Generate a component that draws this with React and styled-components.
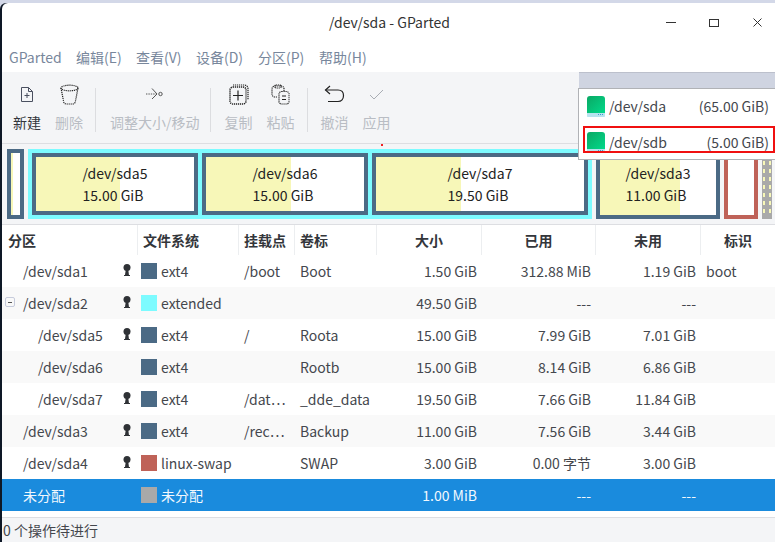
import styled, { createGlobalStyle } from "styled-components";

const GlobalStyle = createGlobalStyle`
  html, body {
    margin: 0;
    padding: 0;
    height: 100%;
    overflow: hidden;
    background: #d3d8e8;
    font-family: "Noto Sans CJK SC", "Noto Sans", sans-serif;
    font-size: 14px;
    color: #3a3d42;
  }
`;

const PARTITIONS = [
  { name: "/dev/sda1", indent: 21, lock: true, color: "#4b6a85", fs: "ext4", mount: "/boot", label: "Boot", size: "1.50 GiB", used: "312.88 MiB", free: "1.19 GiB", flag: "boot" },
  { name: "/dev/sda2", indent: 21, lock: true, color: "#7dfbff", fs: "extended", size: "49.50 GiB", used: "---", free: "---", expander: true },
  { name: "/dev/sda5", indent: 36, lock: true, color: "#4b6a85", fs: "ext4", mount: "/", label: "Roota", size: "15.00 GiB", used: "7.99 GiB", free: "7.01 GiB" },
  { name: "/dev/sda6", indent: 36, color: "#4b6a85", fs: "ext4", label: "Rootb", size: "15.00 GiB", used: "8.14 GiB", free: "6.86 GiB" },
  { name: "/dev/sda7", indent: 36, lock: true, color: "#4b6a85", fs: "ext4", mount: "/dat\u22EF", label: "_dde_data", size: "19.50 GiB", used: "7.66 GiB", free: "11.84 GiB" },
  { name: "/dev/sda3", indent: 21, lock: true, color: "#4b6a85", fs: "ext4", mount: "/rec\u22EF", label: "Backup", size: "11.00 GiB", used: "7.56 GiB", free: "3.44 GiB" },
  { name: "/dev/sda4", indent: 21, lock: true, color: "#bf6258", fs: "linux-swap", label: "SWAP", size: "3.00 GiB", used: "0.00 字节", free: "3.00 GiB" },
  { name: "未分配", indent: 21, color: "#a9a9a9", fs: "未分配", size: "1.00 MiB", used: "---", free: "---", selected: true },
];

const COLUMNS = "136px 101px 56px 82px 105px 114px 105px 1fr";

const DottedIcon = ({ children, width, height }) => (
  <svg
    width={width}
    height={height}
    viewBox={`0 0 ${width} ${height}`}
    fill="none"
    stroke="#222"
    strokeWidth="1.2"
    strokeDasharray="1.2 0.8"
  >
    {children}
  </svg>
);

const NewIcon = () => (
  <svg width="12" height="15" viewBox="0 0 12 15" fill="none" stroke="#4a5060" strokeWidth="1">
    <path d="M.5.5h7l4 4v10H.5z" />
    <path d="M7.5.5v4h4M3.5 8.5h5M6 6v5" />
  </svg>
);

const TrashIcon = () => (
  <DottedIcon width={19} height={21}>
    <ellipse cx="9.5" cy="4" rx="8.5" ry="2.8" />
    <path d="M1 4l2.6 13.5c.3 1.8 1.6 2.5 3 2.5h5.8c1.4 0 2.7-.7 3-2.5L18 4" />
  </DottedIcon>
);

const ResizeIcon = () => (
  <svg width="17" height="12" viewBox="0 0 17 12" fill="none" stroke="#555" strokeWidth="1">
    <path d="M0 6h11" strokeDasharray="1.4 1" />
    <path d="M6 .5L11 6l-5 5" />
    <circle cx="14.5" cy="6" r="1.7" />
  </svg>
);

const CopyIcon = () => (
  <DottedIcon width={20} height={21}>
    <rect x="1" y="3" width="16" height="17" rx="3" strokeWidth="1.5" />
    <path d="M4 1h11c2.4 0 4 1.6 4 4v11" />
    <path d="M9 6.5v10M4 11.500h10" strokeDasharray="none" />
  </DottedIcon>
);

const PasteIcon = () => (
  <DottedIcon width={19} height={21}>
    <path d="M6 13H4c-1.800 0-3-1.200-3-3V5c0-1.800 1.200-3 3-3h6c2 0 3 1.200 3 3v2" />
    <rect x="4" y="1" width="6" height="3" rx="1" />
    <rect x="8" y="7.5" width="10" height="12.5" rx="2.5" />
    <path d="M11 12h4M11 15.500h4" strokeDasharray="none" />
  </DottedIcon>
);

const UndoIcon = () => (
  <svg width="21" height="18" viewBox="0 0 21 18" fill="none" stroke="#222" strokeWidth="1.2">
    <path d="M6 1L1.5 5 6 9" />
    <path d="M1.500 5H14c3.500 0 5.500 2.200 5.500 5.500S17.500 16.500 14 16.500H4" />
  </svg>
);

const CheckIcon = () => (
  <svg width="15" height="11" viewBox="0 0 15 11" fill="none" stroke="#a9adb4" strokeWidth="1">
    <path d="M1 6l4 4 9-9" />
  </svg>
);

const LockIcon = () => (
  <svg width="8" height="12" viewBox="0 0 8 12" fill="#2f3236">
    <circle cx="4" cy="3.5" r="3.5" />
    <path d="M2.800 5h2.400l.9 7H1.900z" />
    <path d="M1 11h6v1H1z" />
  </svg>
);

const DiskIcon = () => (
  <svg width="18" height="21" viewBox="0 0 18 21">
    <defs>
      <linearGradient id="disk" x1="0" y1="0" x2="1" y2="1">
        <stop offset="0" stopColor="#0aa864" />
        <stop offset="1" stopColor="#02d98a" />
      </linearGradient>
    </defs>
    <path d="M3 0h12c2 0 3 1 3 3v14H0V3C0 1 1 0 3 0z" fill="url(#disk)" />
    <path d="M0 17h18v3c0 .6-.4 1-1 1H1c-.6 0-1-.4-1-1z" fill="#b7e3ee" />
    <path d="M11 18.500h5" stroke="#3d9bd0" strokeWidth="1" strokeDasharray="1 1" />
  </svg>
);

const CloseIcon = () => (
  <svg width="9" height="9" viewBox="0 0 9 9" stroke="#333" strokeWidth="1" style={{ display: "block" }}>
    <path d="M.5.5l8 8M8.500.5l-8 8" />
  </svg>
);

const Partition = ({ name, size, width, used, color, tall }) => (
  <PartitionBox $width={width} $used={used} $color={color} $tall={tall}>
    {name && (
      <PartitionText>
        <div>{name}</div>
        <div>{size}</div>
      </PartitionText>
    )}
  </PartitionBox>
);

const App = () => {
  return (
    <>
      <GlobalStyle />
      <Window>
        <TitleBar>
          <Title>/dev/sda - GParted</Title>
          <WindowButtons>
            <MinimizeGlyph />
            <MaximizeGlyph />
            <CloseIcon />
          </WindowButtons>
        </TitleBar>
        <MenuBar>
          <MenuLabel $width={67}>GParted</MenuLabel>
          <MenuLabel $width={60}>编辑(E)</MenuLabel>
          <MenuLabel $width={60}>查看(V)</MenuLabel>
          <MenuLabel $width={62}>设备(D)</MenuLabel>
          <MenuLabel $width={61}>分区(P)</MenuLabel>
          <MenuLabel>帮助(H)</MenuLabel>
        </MenuBar>
        <Toolbar>
          <ToolButton><IconSlot><NewIcon /></IconSlot><ToolLabel $active>新建</ToolLabel></ToolButton>
          <ToolButton><IconSlot><TrashIcon /></IconSlot><ToolLabel>删除</ToolLabel></ToolButton>
          <ToolSeparator />
          <ToolButton $tight><IconSlot><ResizeIcon /></IconSlot><ToolLabel>调整大小/移动</ToolLabel></ToolButton>
          <ToolSeparator />
          <ToolButton><IconSlot><CopyIcon /></IconSlot><ToolLabel>复制</ToolLabel></ToolButton>
          <ToolButton><IconSlot><PasteIcon /></IconSlot><ToolLabel>粘贴</ToolLabel></ToolButton>
          <ToolSeparator $narrow />
          <ToolButton><IconSlot><UndoIcon /></IconSlot><ToolLabel>撤消</ToolLabel></ToolButton>
          <ToolButton><IconSlot><CheckIcon /></IconSlot><ToolLabel>应用</ToolLabel></ToolButton>
        </Toolbar>
        <DiskMap>
          <Partition width={17} used={22} color="#4b6a85" tall />
          <Extended>
            <Partition name="/dev/sda5" size="15.00 GiB" width={166} used={53} color="#4b6a85" />
            <Partition name="/dev/sda6" size="15.00 GiB" width={166} used={54} color="#4b6a85" />
            <Partition name="/dev/sda7" size="19.50 GiB" width={216} used={41} color="#4b6a85" />
          </Extended>
          <Partition name="/dev/sda3" size="11.00 GiB" width={124} used={69} color="#4b6a85" tall />
          <Partition width={34} used={0} color="#bf6258" tall />
          <Unallocated />
        </DiskMap>
        <Table>
          <HeaderRow>
            <HeaderCell>分区</HeaderCell>
            <HeaderCell>文件系统</HeaderCell>
            <HeaderCell>挂载点</HeaderCell>
            <HeaderCell>卷标</HeaderCell>
            <HeaderCell $center>大小</HeaderCell>
            <HeaderCell $center>已用</HeaderCell>
            <HeaderCell $center>未用</HeaderCell>
            <HeaderCell $center $last>标识</HeaderCell>
          </HeaderRow>
          {PARTITIONS.map((p, i) => (
            <Row key={p.name} $alt={i % 2 === 1} $selected={p.selected}>
              <NameCell $indent={p.indent}>
                {p.expander && <Expander />}
                <span>{p.name}</span>
                {p.lock && <LockSlot><LockIcon /></LockSlot>}
              </NameCell>
              <FsCell>
                <Swatch $color={p.color} />
                {p.fs}
              </FsCell>
              <TextCell>{p.mount}</TextCell>
              <TextCell>{p.label}</TextCell>
              <NumberCell>{p.size}</NumberCell>
              <NumberCell>{p.used}</NumberCell>
              <NumberCell>{p.free}</NumberCell>
              <TextCell>{p.flag}</TextCell>
            </Row>
          ))}
        </Table>
        <StatusBar>0 个操作待进行</StatusBar>
        <RedDot />
        <DevicePopup>
          <ComboTop />
          <DeviceMenu>
            <DeviceItem>
              <DiskIcon />
              <DeviceName>/dev/sda</DeviceName>
              <span>(65.00 GiB)</span>
            </DeviceItem>
            <DeviceItem $marked>
              <DiskIcon />
              <DeviceName>/dev/sdb</DeviceName>
              <span>(5.00 GiB)</span>
            </DeviceItem>
          </DeviceMenu>
        </DevicePopup>
      </Window>
    </>
  );
};

const Window = styled.div`
  position: relative;
  display: flex;
  flex-direction: column;
  width: 773px;
  height: 539px;
  margin: 3px 0 0 2px;
  background: #fff;
  border-radius: 6px 0 0 0;
  overflow: hidden;
  box-shadow: -2px 0 0 #0e1826;
`;

const TitleBar = styled.div`
  position: relative;
  display: flex;
  align-items: center;
  justify-content: center;
  height: 38px;
  flex: none;
`;

const Title = styled.div`
  margin-left: 2px;
  color: #333;
  line-height: 38px;
`;

const WindowButtons = styled.div`
  position: absolute;
  top: 15px;
  right: 13px;
  display: flex;
  align-items: center;
  gap: 33px;
`;

const MinimizeGlyph = styled.div`
  width: 10px;
  height: 1px;
  background: #333;
`;

const MaximizeGlyph = styled.div`
  width: 8px;
  height: 6px;
  margin-right: 1px;
  border: 1px solid #333;
`;

const MenuBar = styled.div`
  display: flex;
  align-items: center;
  height: 31px;
  padding-left: 7px;
  flex: none;
  color: #78879c;
`;

const MenuLabel = styled.div`
  width: ${(p) => (p.$width ? `${p.$width}px` : "auto")};
`;

const Toolbar = styled.div`
  display: flex;
  align-items: flex-start;
  height: 71px;
  padding-left: 4px;
  background: #f4f5f7;
  border-bottom: 1px solid #dddee2;
  flex: none;
`;

const ToolButton = styled.div`
  display: flex;
  flex-direction: column;
  align-items: center;
  padding: 10px ${(p) => (p.$tight ? 5 : 7)}px 0 7px;
`;

const IconSlot = styled.div`
  display: flex;
  align-items: center;
  justify-content: center;
  height: 24px;
`;

const ToolLabel = styled.div`
  margin-top: 6px;
  line-height: 20px;
  white-space: nowrap;
  color: ${(p) => (p.$active ? "#33363b" : "#b9bdc4")};
`;

const ToolSeparator = styled.div`
  width: 1px;
  height: 44px;
  margin: 16px ${(p) => (p.$narrow ? 6 : 7)}px 0 5px;
  background: #dcdde0;
`;

const DiskMap = styled.div`
  display: flex;
  align-items: center;
  gap: 4px;
  height: 80px;
  padding-left: 5px;
  background: #f4f5f7;
  border-bottom: 1px solid #dddee2;
  flex: none;
`;

const Extended = styled.div`
  display: flex;
  gap: 4px;
  padding: 4px;
  background: #7dfbff;
`;

const PartitionBox = styled.div`
  display: flex;
  align-items: center;
  justify-content: center;
  box-sizing: border-box;
  width: ${(p) => p.$width}px;
  height: ${(p) => (p.$tall ? 70 : 62)}px;
  border: 4px solid ${(p) => p.$color};
  background: linear-gradient(to right, #f7f7b8 ${(p) => p.$used}%, #fff ${(p) => p.$used}%);
  color: #222;
  line-height: 22px;
`;

const PartitionText = styled.div`
  text-align: left;
  white-space: nowrap;
`;

const Unallocated = styled.div`
  box-sizing: border-box;
  width: 10px;
  height: 70px;
  background-color: #a9a9a9;
  background-image:
    repeating-linear-gradient(to bottom, #f7f7b8 0 4px, transparent 4px 8px),
    repeating-linear-gradient(to bottom, #f7f7b8 0 4px, transparent 4px 8px);
  background-size: 2px 60px, 2px 60px;
  background-position: 1px 4px, 7px 4px;
  background-repeat: no-repeat;
`;

const Table = styled.div`
  display: flex;
  flex-direction: column;
  flex: none;
  height: 292px;
  border-bottom: 1px solid #dddee2;
`;

const HeaderRow = styled.div`
  display: grid;
  grid-template-columns: ${COLUMNS};
  height: 30px;
  flex: none;
`;

const HeaderCell = styled.div`
  display: flex;
  align-items: center;
  justify-content: ${(p) => (p.$center ? "center" : "flex-start")};
  padding-left: ${(p) => (p.$center ? 0 : 5)}px;
  border-right: ${(p) => (p.$last ? "none" : "1px solid #eceef0")};
  font-weight: 700;
  color: #33363b;
  &:first-child {
    padding-left: 6px;
  }
`;

const Row = styled.div`
  display: grid;
  grid-template-columns: ${COLUMNS};
  align-items: center;
  height: 32px;
  flex: none;
  background: ${(p) => (p.$selected ? "#1a8bdd" : p.$alt ? "#f9f9f9" : "#fff")};
  color: ${(p) => (p.$selected ? "#f2f8fd" : "#44474d")};
`;

const NameCell = styled.div`
  position: relative;
  display: flex;
  align-items: center;
  padding-left: ${(p) => p.$indent}px;
`;

const Expander = styled.div`
  position: absolute;
  left: 3px;
  top: 4px;
  width: 8px;
  height: 8px;
  border: 1px solid #c7ccdc;
  border-radius: 2px;
  &::after {
    content: "";
    display: block;
    width: 4px;
    height: 1px;
    margin: 3.5px 2px;
    background: #555;
  }
`;

const LockSlot = styled.div`
  position: absolute;
  left: 121px;
  top: 3px;
  display: flex;
`;

const FsCell = styled.div`
  display: flex;
  align-items: center;
  gap: 4px;
  padding-left: 3px;
  white-space: nowrap;
`;

const Swatch = styled.div`
  width: 16px;
  height: 16px;
  background: ${(p) => p.$color};
  flex: none;
`;

const TextCell = styled.div`
  padding-left: 5px;
  white-space: nowrap;
`;

const NumberCell = styled.div`
  padding-right: 5px;
  text-align: right;
  white-space: nowrap;
`;

const StatusBar = styled.div`
  display: flex;
  align-items: center;
  flex: 1;
  padding-left: 1px;
  background: #f4f5f7;
  color: #44474d;
`;

const RedDot = styled.div`
  position: absolute;
  left: 379px;
  top: 141px;
  width: 2px;
  height: 2px;
  background: #f02020;
`;

const DevicePopup = styled.div`
  position: absolute;
  top: 69px;
  right: 0;
  width: 197px;
  display: flex;
  flex-direction: column;
`;

const ComboTop = styled.div`
  height: 16px;
  margin-left: 1px;
  background: #cfd4e1;
  border-top: 1px solid #bcc0cc;
  box-sizing: border-box;
`;

const DeviceMenu = styled.div`
  display: flex;
  flex-direction: column;
  gap: 8px;
  height: 72px;
  padding: 3px 0 0 4px;
  box-sizing: border-box;
  background: #fff;
  border: 1px solid #b0b2b6;
  border-right: none;
`;

const DeviceItem = styled.div`
  position: relative;
  display: flex;
  align-items: center;
  box-sizing: border-box;
  height: 28px;
  padding: 0 6px 0 4px;
  color: #44474d;

  &::after {
    content: "";
    display: ${(p) => (p.$marked ? "block" : "none")};
    position: absolute;
    top: -2px;
    left: 0;
    right: 0;
    height: 27px;
    box-sizing: border-box;
    border: 2px solid #f01010;
  }
`;

const DeviceName = styled.span`
  margin-left: 4px;
  flex: 1;
`;

export default App;
